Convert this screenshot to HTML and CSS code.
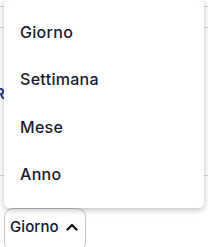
FILE: index.html
```html
<!DOCTYPE html>
<html lang="it">
<head>
  <meta charset="UTF-8">
  <title>Periodo</title>
  <link rel="stylesheet" href="styles.css">
</head>
<body>
  <div class="page">
    <!-- sfondo: tabella dietro il menu -->
    <div class="bg">
      <div class="bg-line l1"></div>
      <div class="bg-row">
        <span class="bg-letter">R</span>
      </div>
      <div class="bg-line l2"></div>
    </div>

    <!-- Menu a tendina aperto -->
    <ul class="menu">
      <li class="menu-item">Giorno</li>
      <li class="menu-item">Settimana</li>
      <li class="menu-item">Mese</li>
      <li class="menu-item">Anno</li>
    </ul>

    <div class="picker">
      <button class="picker-btn">
        Giorno
        <svg width="12" height="8" viewBox="0 0 12 8"><path d="M1.5 6.5 L6 2 L10.5 6.5" fill="none" stroke="#111" stroke-width="2.2" stroke-linecap="round" stroke-linejoin="round"/></svg>
      </button>
    </div>
  </div>
</body>
</html>
```

FILE: styles.css
```css
* { box-sizing: border-box; }
html, body {
  margin: 0; padding: 0;
  width: 208px; height: 247px;
  overflow: hidden;
  background: #fff;
  font-family: Inter, "Noto Sans", sans-serif;
}
.page {
  position: relative;
  width: 208px;
  height: 247px;
}
/* Sfondo */
.bg {
  height: 208px;
  padding-top: 6px;
}
.bg-line { height: 1px; background: #d6d6d6; }
.bg-line.l1 { box-shadow: 0 21px 0 #d6d6d6; }
.bg-row {
  height: 168px;
  padding-top: 77px;
}
.bg-letter {
  display: block;
  margin-left: -5px;
  color: #1a3c8c;
  font-size: 15px;
  font-weight: 600;
}
/* Menu */
.menu {
  position: absolute;
  top: 0;
  left: 4px;
  width: 200px;
  margin: 0;
  padding: 8px 0 10px;
  list-style: none;
  background: #fff;
  border-radius: 5px;
  box-shadow: 0 2px 6px rgba(0,0,0,0.25);
  z-index: 10;
}
.menu-item {
  height: 47.5px;
  display: flex;
  align-items: center;
  padding-left: 16px;
  font-size: 16px;
  font-weight: 500;
  color: #1b1b2f;
  letter-spacing: 0.3px;
}
/* Pulsante */
.picker { padding-left: 4px; }
.picker-btn {
  display: flex;
  align-items: center;
  gap: 7px;
  width: 82px;
  height: 44px;
  padding: 0 0 7px 5px;
  background: #fff;
  border: 1px solid #c4c4c4;
  border-radius: 9px;
  font-family: inherit;
  font-size: 15px;
  font-weight: 500;
  letter-spacing: 0.1px;
  color: #0d1633;
}
```
